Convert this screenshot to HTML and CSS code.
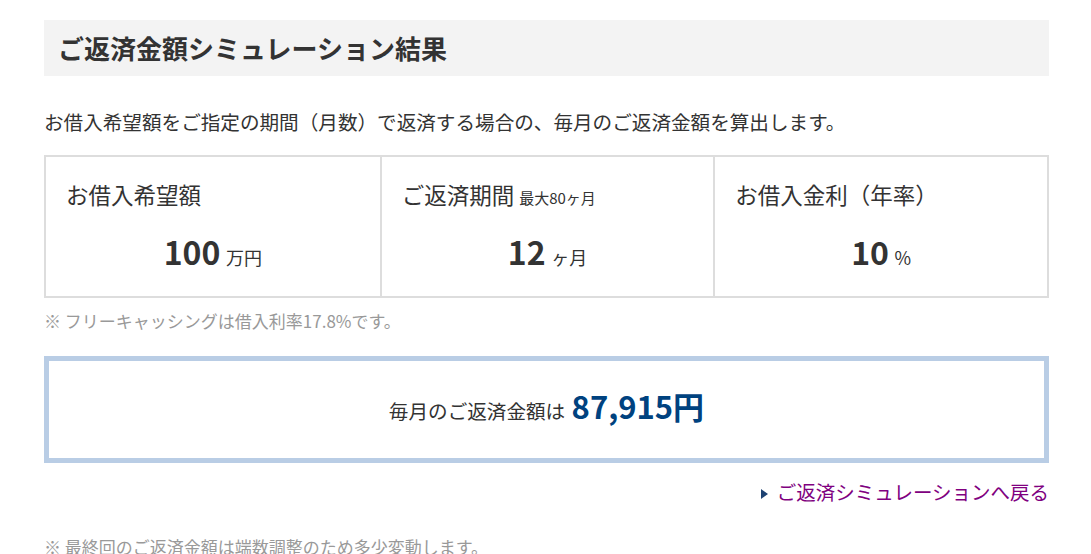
FILE: index.html
```html
<!DOCTYPE html>
<html>
<head>
  <title>ご返済金額シミュレーション結果</title>
  <link rel="stylesheet" href="styles.css">
</head>
<body>
  <main class="sim">
    <h2 class="sim-title">ご返済金額シミュレーション結果</h2>

    <p class="sim-lead">お借入希望額をご指定の期間（月数）で返済する場合の、毎月のご返済金額を算出します。</p>

    <div class="sim-table">
      <div class="sim-cell">
        <p class="sim-label">お借入希望額</p>
        <p class="sim-value"><strong>100</strong> <span>万円</span></p>
      </div>
      <div class="sim-cell">
        <p class="sim-label">ご返済期間 <small>最大80ヶ月</small></p>
        <p class="sim-value"><strong>12</strong> <span>ヶ月</span></p>
      </div>
      <div class="sim-cell">
        <p class="sim-label">お借入金利（年率）</p>
        <p class="sim-value"><strong>10</strong> <span>%</span></p>
      </div>
    </div>

    <p class="sim-note">※ フリーキャッシングは借入利率17.8%です。</p>

    <div class="sim-result">
      <p>毎月のご返済金額は <strong>87,915円</strong></p>
    </div>

    <p class="sim-back"><a href="#">ご返済シミュレーションへ戻る</a></p>

    <p class="sim-note sim-note-last">※ 最終回のご返済金額は端数調整のため多少変動します。</p>
  </main>
</body>
</html>
```

FILE: styles.css
```css
/* page */
body {
  font-family: "Noto Sans CJK JP", "Noto Sans", sans-serif;
  color: #333;
  margin: 0;
  padding: 20px 42px 0 44px;
  background: #fff;
}
p {
  margin: 0;
}
.sim {
  width: 1005px;
}
.sim-title {
  margin: 0;
  height: 56px;
  line-height: 56px;
  padding: 0 14px;
  background: #f3f3f3;
  font-size: 26px;
  font-weight: bold;
  color: #333;
}
.sim-lead {
  margin-top: 31px;
  font-size: 19.6px;
  line-height: 30px;
}
/* three input cells */
.sim-table {
  display: grid;
  grid-template-columns: 1fr 1fr 1fr;
  margin-top: 18px;
  border: 2px solid #ddd;
}
.sim-cell {
  padding: 22px 20px 21px;
}
.sim-cell + .sim-cell {
  border-left: 2px solid #ddd;
}
.sim-label {
  font-size: 22.5px;
  line-height: 30px;
}
.sim-label small {
  font-size: 15px;
  line-height: 1;
}
.sim-value {
  margin-top: 26px;
  height: 40px;
  line-height: 40px;
  text-align: center;
}
.sim-value strong {
  font-size: 32px;
  font-weight: bold;
  line-height: 1;
}
.sim-value span {
  font-size: 18px;
  line-height: 1;
  margin-left: 2px;
}
.sim-note {
  margin-top: 11px;
  font-size: 17px;
  line-height: 24px;
  color: #999;
}
/* result */
.sim-result {
  margin-top: 23px;
  height: 97px;
  border: 5px solid #b9cde5;
  display: flex;
  align-items: center;
  justify-content: center;
}
.sim-result p {
  font-size: 19.6px;
  height: 40px;
  line-height: 40px;
}
.sim-result strong {
  font-size: 31px;
  font-weight: bold;
  line-height: 1;
  color: #00427f;
  margin-left: 2px;
}
.sim-back {
  margin-top: 15px;
  text-align: right;
  font-size: 19.5px;
  line-height: 28px;
}
.sim-back a {
  color: #800080;
  text-decoration: none;
}
.sim-back a::before {
  content: "";
  display: inline-block;
  border-left: 7px solid #1d4272;
  border-top: 5px solid transparent;
  border-bottom: 5px solid transparent;
  margin-right: 9px;
  vertical-align: 1px;
}
.sim-note-last {
  margin-top: 29px;
}
```
